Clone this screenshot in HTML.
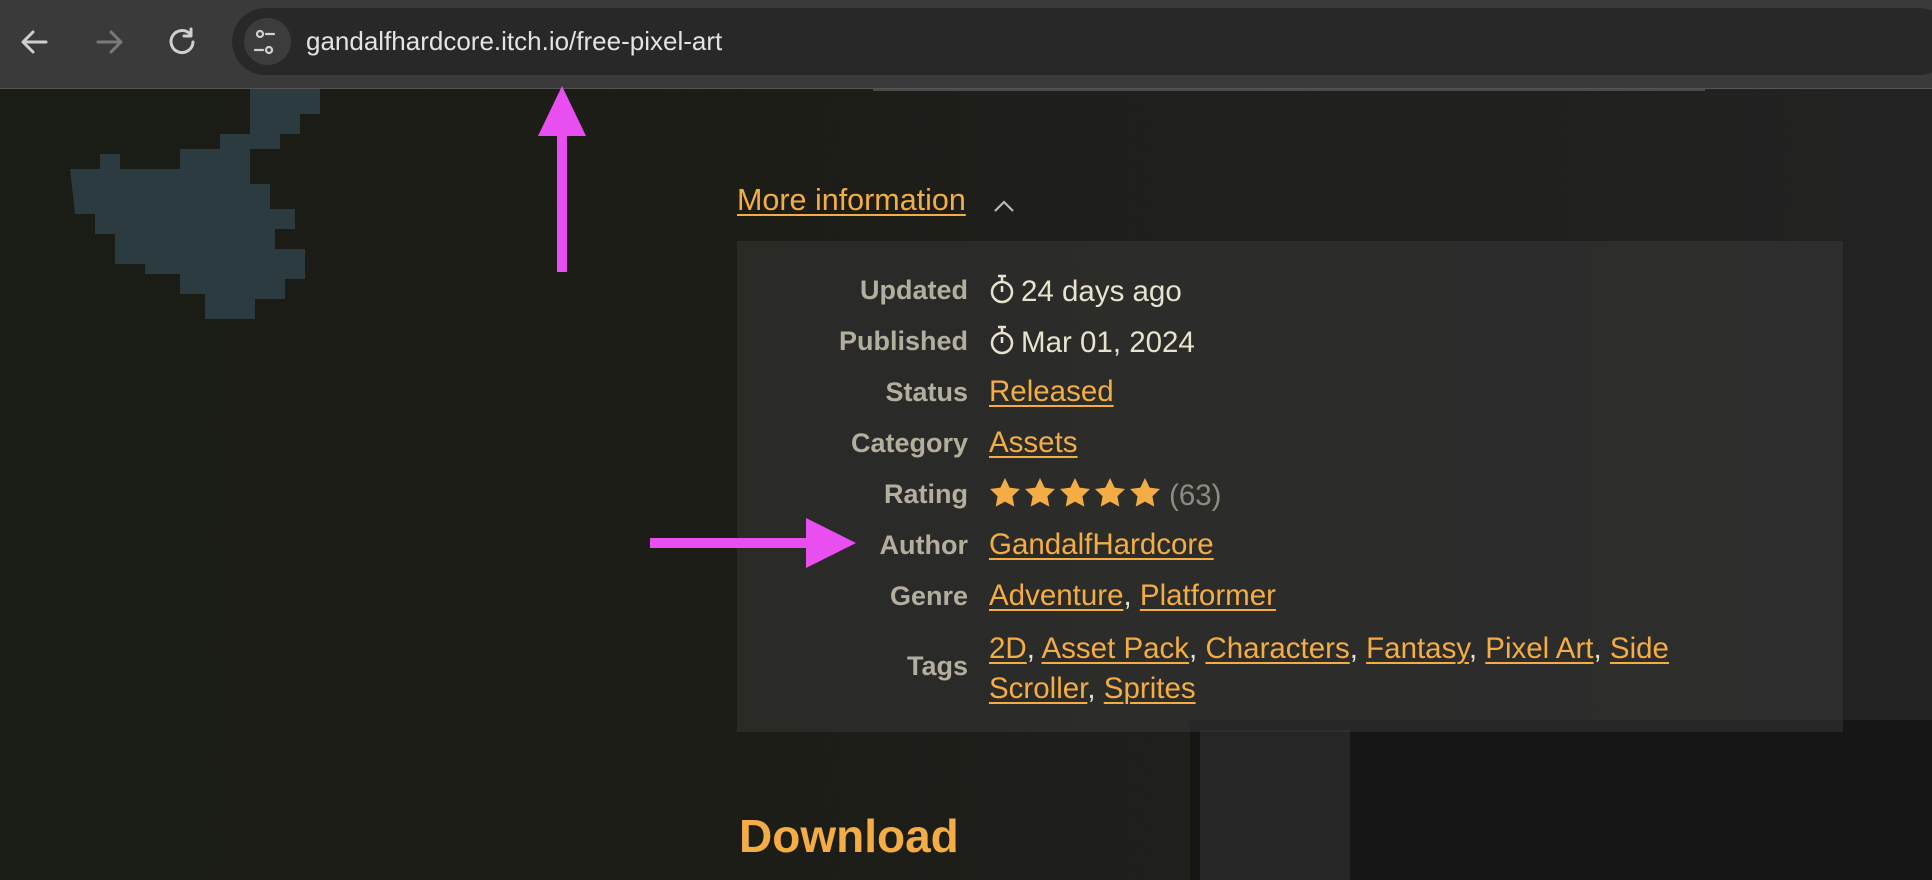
<!DOCTYPE html>
<html><head><meta charset="utf-8"><style>
*{margin:0;padding:0;box-sizing:border-box}
body{width:1932px;height:880px;overflow:hidden;position:relative;font-family:"Liberation Sans",sans-serif;
background:linear-gradient(90deg,#1a1c16 0,#1c1d17 40%,#1f1f1c 60%,#222222 100%);}
.bg{position:absolute}
#bar{position:absolute;left:0;top:0;width:1932px;height:89px;background:#3a3a3a;border-bottom:1px solid #555}
#pill{position:absolute;left:232px;top:8px;width:1720px;height:67px;border-radius:34px;background:#282828}
#site{position:absolute;left:244px;top:18px;width:47px;height:47px;border-radius:50%;background:#3c3c3c}
#url{position:absolute;left:306px;top:26px;font-size:26px;color:#e3e3e3}
a{color:#f4ad45;text-decoration:underline;text-decoration-thickness:2px;text-underline-offset:4px}
#more{position:absolute;left:737px;top:183px;font-size:30.5px}
#panel{position:absolute;left:737px;top:241px;width:1106px;height:491px;background:rgba(60,60,60,0.45)}
.row{position:absolute;left:0;width:1106px;font-size:29.5px;line-height:34px}
.row .lab{position:absolute;left:0;width:231px;text-align:right;color:#b3ae9e;font-weight:bold;font-size:27px}
.val{position:absolute;left:252px;color:#e8e2cf;white-space:nowrap}
.ic{display:inline-block;vertical-align:-4px;margin-right:6px}
#dl{position:absolute;left:739px;top:809px;font-size:46px;font-weight:bold;color:#f4ad45}
</style></head><body>
<svg class="bg" style="left:0;top:89px" width="400" height="230"><path fill="#2c3b40" d="M250 0h70v30h-10v25h-20v15h-40v60h-10v25h-25v20h25v20h35v20h20v25h-15v15h-20v25h-25v10h-40v-40h-15v-30h-30v-20h-35v-25h-30v-40h-15v-20h20v-15h25v15h30v-20h40v-30h25z" opacity="0"/>
<path fill="#2c3b40" d="M250 0h70v25h-20v20h-20v15h-30zM70 80h30v-15h20v15h60v-20h40v-15h30v50h20v25h25v20h-20v20h30v30h-20v20h-30v30h-20v-5h-30v-30h-25v-20h-35v-10h-30v-30h-20v-20h-20z"/></svg>
<div class="bg" style="left:1190px;top:720px;width:742px;height:160px;background:#161616"></div>
<div class="bg" style="left:1200px;top:730px;width:150px;height:150px;background:#262626"></div>
<div id="bar"><div id="pill"></div><div id="site"></div>
<svg style="position:absolute;left:0;top:0" width="300" height="89">
<g fill="none" stroke="#cfcfcf" stroke-width="3" stroke-linecap="round" stroke-linejoin="round">
<path d="M46 42H24M33 32l-10 10 10 10"/>
<path d="M98 42h22M111 32l10 10-10 10" stroke="#7a7a7a"/>
<path d="M190 34a11 11 0 1 0 3 8M191 29v7h-7"/>
<circle cx="260" cy="34" r="3" stroke-width="2.3"/><path d="M266 34h8M255 50h8" stroke-width="2.3"/><circle cx="269" cy="50" r="3" stroke-width="2.3"/>
</g></svg>
<div id="url">gandalfhardcore.itch.io/free-pixel-art</div></div>
<div class="bg" style="left:873px;top:89px;width:832px;height:2px;background:#4a4a4a"></div>
<div id="more"><a>More information</a></div>
<svg class="bg" style="left:992px;top:196px" width="24" height="20"><path d="M3 15l9-9 9 9" fill="none" stroke="#bbb" stroke-width="2.2"/></svg>
<div id="panel">
<div class="row" style="top:32px"><span class="lab">Updated</span><span class="val"><svg class="ic" width="26" height="32" viewBox="0 0 26 32"><g fill="none" stroke="#e8e2cf" stroke-width="2.5"><circle cx="13" cy="19" r="10"/><path d="M13 19v-6M9 3h8M13 3v6"/></g></svg>24 days ago</span></div>
<div class="row" style="top:83px"><span class="lab">Published</span><span class="val"><svg class="ic" width="26" height="32" viewBox="0 0 26 32"><g fill="none" stroke="#e8e2cf" stroke-width="2.5"><circle cx="13" cy="19" r="10"/><path d="M13 19v-6M9 3h8M13 3v6"/></g></svg>Mar 01, 2024</span></div>
<div class="row" style="top:134px"><span class="lab">Status</span><span class="val"><a>Released</a></span></div>
<div class="row" style="top:185px"><span class="lab">Category</span><span class="val"><a>Assets</a></span></div>
<div class="row" style="top:236px"><span class="lab">Rating</span><span class="val"><svg class="ic" width="174" height="32" viewBox="0 0 174 32"><g fill="#f4ad45"><path id="s" d="M16 1l4.6 9.6 10.4 1.4-7.6 7.2 1.9 10.4L16 24.6l-9.3 5 1.9-10.4L1 12l10.4-1.4z"/><use href="#s" x="35"/><use href="#s" x="70"/><use href="#s" x="105"/><use href="#s" x="140"/></g></svg><span style="color:#8f8b80">(63)</span></span></div>
<div class="row" style="top:287px"><span class="lab">Author</span><span class="val"><a>GandalfHardcore</a></span></div>
<div class="row" style="top:338px"><span class="lab">Genre</span><span class="val"><a>Adventure</a>, <a>Platformer</a></span></div>
<div class="row" style="top:408px"><span class="lab">Tags</span></div>
<div class="row" style="top:388px"><span class="val" style="line-height:40px"><a>2D</a>, <a>Asset Pack</a>, <a>Characters</a>, <a>Fantasy</a>, <a>Pixel Art</a>, <a>Side</a><br><a>Scroller</a>, <a>Sprites</a></span></div>
</div>
<div id="dl">Download</div>
<svg style="position:absolute;left:0;top:0" width="1932" height="880">
<g fill="#e94ff0"><rect x="557" y="130" width="10" height="142"/><polygon points="562,86 538,136 586,136"/>
<rect x="650" y="538" width="160" height="10"/><polygon points="856,543 806,518 806,568"/></g></svg>
</body></html>
